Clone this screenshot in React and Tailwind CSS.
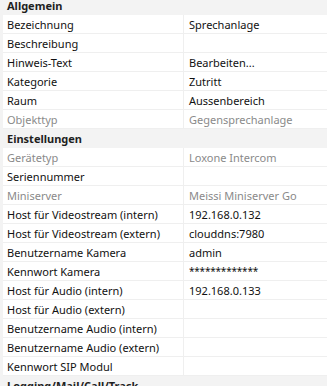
import React from 'react';

const sections = [
  {
    title: 'Allgemein',
    rows: [
      { label: 'Bezeichnung', value: 'Sprechanlage' },
      { label: 'Beschreibung', value: '' },
      { label: 'Hinweis-Text', value: 'Bearbeiten...' },
      { label: 'Kategorie', value: 'Zutritt' },
      { label: 'Raum', value: 'Aussenbereich' },
      { label: 'Objekttyp', value: 'Gegensprechanlage', muted: true },
    ],
  },
  {
    title: 'Einstellungen',
    rows: [
      { label: 'Gerätetyp', value: 'Loxone Intercom', muted: true },
      { label: 'Seriennummer', value: '' },
      { label: 'Miniserver', value: 'Meissi Miniserver Go', muted: true },
      { label: 'Host für Videostream (intern)', value: '192.168.0.132' },
      { label: 'Host für Videostream (extern)', value: 'clouddns:7980' },
      { label: 'Benutzername Kamera', value: 'admin' },
      { label: 'Kennwort Kamera', value: '*************', password: true },
      { label: 'Host für Audio (intern)', value: '192.168.0.133' },
      { label: 'Host für Audio (extern)', value: '' },
      { label: 'Benutzername Audio (intern)', value: '' },
      { label: 'Benutzername Audio (extern)', value: '' },
      { label: 'Kennwort SIP Modul', value: '' },
    ],
  },
  { title: 'Logging/Mail/Call/Track', rows: [] },
];

const SectionHeader = ({ title, first }) => (
  <div className={`h-[19px] shrink-0 bg-[#f3f3f3] pl-[7px] flex items-center font-bold text-[#1f1f1f] ${first ? '-mt-[4px]' : ''}`}>
    {title}
  </div>
);

const Row = ({ label, value, muted, password }) => (
  <div className="h-[19px] shrink-0 flex bg-[#f3f3f3]">
    <div className="ml-[3px] flex-1 flex bg-white border-b border-[#efefef]">
      <div className={`w-[181px] shrink-0 border-r border-[#efefef] pl-[4px] flex items-center whitespace-nowrap overflow-hidden ${muted ? 'text-[#8a8a8a]' : 'text-[#111]'}`}>
        {label}
      </div>
      <div className={`flex-1 pl-[5px] flex items-center whitespace-nowrap overflow-hidden ${muted ? 'text-[#8a8a8a]' : 'text-[#111]'} ${password ? 'text-[10px] tracking-[-0.2px]' : ''}`}>
        {value}
      </div>
    </div>
  </div>
);

export default function App() {
  return (
    <div className="w-[327px] h-[386px] overflow-hidden bg-white flex flex-col text-[11px] leading-none font-['Noto_Sans',sans-serif]">
      {sections.map((s, i) => (
        <React.Fragment key={s.title}>
          <SectionHeader title={s.title} first={i === 0} />
          {s.rows.map((r) => (
            <Row key={r.label} {...r} />
          ))}
        </React.Fragment>
      ))}
    </div>
  );
}
